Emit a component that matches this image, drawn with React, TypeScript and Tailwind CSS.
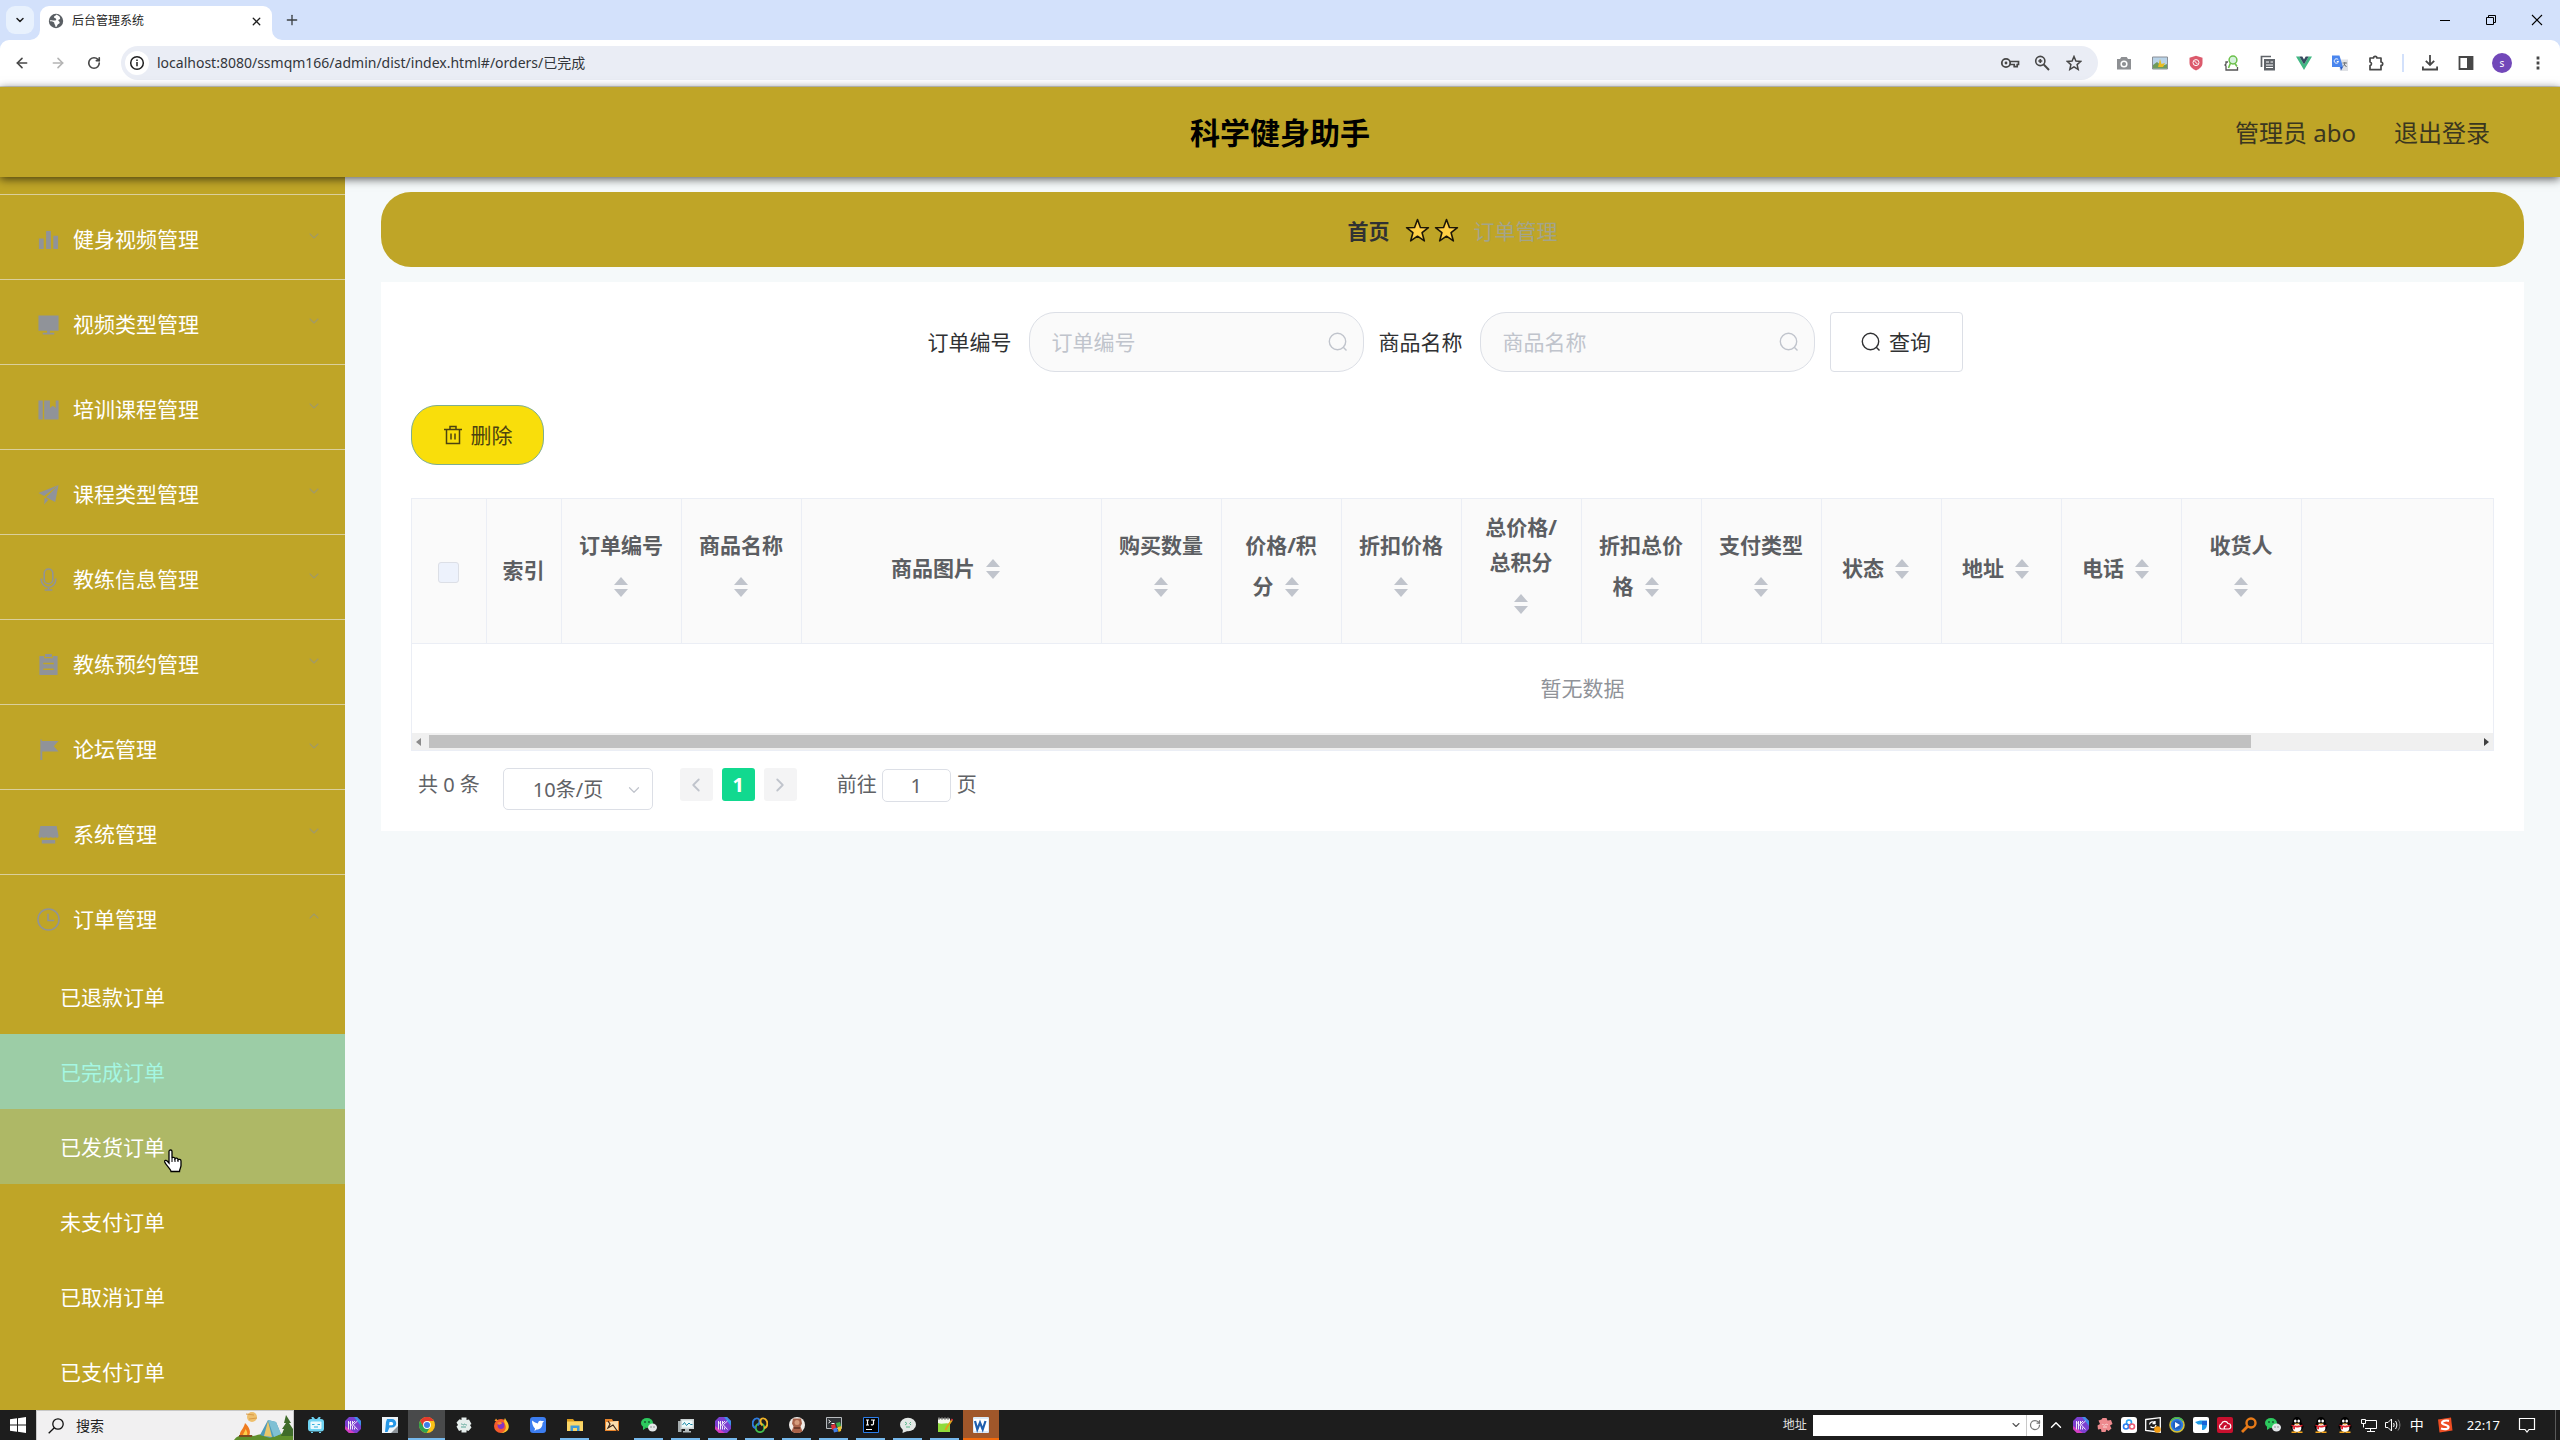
import type { ReactNode } from "react";
import { ArrowLeft, ArrowRight, ChevronDown, ChevronUp, ChevronLeft, ChevronRight, Plus, RotateCw, X } from "lucide-react";

function Svg({ size = 16, box = 16, className, children }: { size?: number; box?: number; className?: string; children: ReactNode }) {
  return (
    <svg width={size} height={size} viewBox={`0 0 ${box} ${box}`} fill="none" className={className ?? "flex-none"} aria-hidden="true">
      {children}
    </svg>
  );
}

/* ---------- browser window ---------- */

function TabStrip() {
  return (
    <div className="flex h-10 flex-none items-end bg-[#d3e1fb]">
      <button aria-label="搜索标签页" className="mb-[6px] ml-[6px] flex h-7 w-7 items-center justify-center rounded-[9px] bg-[#e8f1fd] text-[#1f1f1f]">
        <ChevronDown size={12} strokeWidth={3} />
      </button>
      <div className="relative ml-[6px] flex h-[34px] w-[232px] items-center rounded-t-[9px] bg-white pb-1 pl-2 pr-[9px]">
        <svg className="absolute -left-[10px] bottom-0" width="10" height="10" aria-hidden="true">
          <path d="M10 0v10H0A10 10 0 0 0 10 0Z" fill="#fff" />
        </svg>
        <svg className="absolute -right-[10px] bottom-0" width="10" height="10" aria-hidden="true">
          <path d="M0 0v10h10A10 10 0 0 1 0 0Z" fill="#fff" />
        </svg>
        <Svg>
          <circle cx="8" cy="8" r="7.2" fill="#5a5f64" />
          <path d="M8.6 1.4c-.6 1.4-2.6 1.2-2.6 2.7 0 1.3 1.3.8 2 1.6.7.9-.2 1.8-1.4 1.8C5 7.5 3.3 6.8 1.6 7.600c.6 1.2 2.6.8 3.9 1.3 1.3.6.5 2 1.3 2.7.7.6.2 1.7.9 2.5 1.6-.2 1.2-1.8 2-2.7.7-.8 2.1-.7 2-2-.1-1-1.5-1.2-1.4-2.2.1-1 1.5-.7 1.8-1.5.3-.8-.6-1.3-.5-2.1" fill="#fff" />
        </Svg>
        <span className="ml-2 flex-1 text-xs leading-4 text-[#1f1f1f]">后台管理系统</span>
        <button aria-label="关闭标签页" className="text-[#1f1f1f]">
          <X size={13} strokeWidth={2.4} />
        </button>
      </div>
      <button aria-label="新标签页" className="mb-3 ml-3 text-[#3c4043]">
        <Plus size={16} strokeWidth={2} />
      </button>
      <div className="ml-auto flex h-10 text-black">
        <button aria-label="最小化" className="flex w-[46px] items-center justify-center">
          <Svg size={12} box={12}><path d="M1 6.5h10" stroke="currentColor" /></Svg>
        </button>
        <button aria-label="还原" className="flex w-[46px] items-center justify-center">
          <Svg size={12} box={12}><path d="M1.5 3.5h7v7h-7zM3.5 3.5v-2h7v7h-2" stroke="currentColor" /></Svg>
        </button>
        <button aria-label="关闭" className="flex w-[46px] items-center justify-center">
          <Svg size={12} box={12}><path d="M1 1l10 10M11 1L1 11" stroke="currentColor" strokeWidth="1.1" /></Svg>
        </button>
      </div>
    </div>
  );
}

const extensions: { name: string; icon: ReactNode }[] = [
  {
    name: "截图",
    icon: (
      <>
        <path d="M1 4h3l1.3-2h5.4L12 4h3v10.5H1z" fill="#8e9093" />
        <circle cx="8" cy="9" r="3.6" fill="#fff" />
        <circle cx="8" cy="9" r="2.1" fill="#8e9093" />
      </>
    ),
  },
  {
    name: "图片",
    icon: (
      <>
        <path d="M.5 2h15v12H.5z" fill="#b9d3e8" stroke="#8a8f96" />
        <path d="M1 10l4-3 5 4 5-2v4.5H1z" fill="#6f9b5c" />
        <path d="M8 4l1.5 5L13 8l-2 4H6l1-4z" fill="#e9bd22" />
      </>
    ),
  },
  {
    name: "拦截",
    icon: (
      <>
        <path d="M8 .8l6.5 2V8c0 3.5-3 6-6.5 7.4C4.5 14 1.5 11.5 1.5 8V2.8z" fill="#dc5a6c" />
        <circle cx="8" cy="7.6" r="3" stroke="#fff" />
        <path d="M6.5 6l3 3.2" stroke="#fff" />
      </>
    ),
  },
  {
    name: "查找",
    icon: (
      <>
        <path d="M4 7H2v2L1 10l1 1v4h11.5v-3" stroke="#555" strokeWidth="1.3" />
        <circle cx="9" cy="5" r="3.9" fill="#d5f1dc" stroke="#6cc04a" strokeWidth="1.5" />
        <path d="M6.5 8L4.5 13M11 8.5l2 3" stroke="#6cc04a" strokeWidth="1.6" />
      </>
    ),
  },
  {
    name: "复制",
    icon: (
      <>
        <path d="M1.5 12V1.5H11" stroke="#5f6368" strokeWidth="1.7" />
        <path d="M4 4h11v11.5H4z" fill="#5f6368" />
        <path d="M6 7h3M6 10h7M6 12.5h7M10.5 7H13" stroke="#fff" />
      </>
    ),
  },
  {
    name: "Vue",
    icon: (
      <>
        <path d="M0 1.5h3.3L8 9.5l4.7-8H16L8 15z" fill="#41b883" />
        <path d="M3.3 1.5h3L8 4.5l1.7-3h3L8 9.5z" fill="#34495e" />
      </>
    ),
  },
  {
    name: "翻译",
    icon: (
      <>
        <path d="M6 4.5h10V16H8z" fill="#dfe1e5" />
        <path d="M0 .5h7.5L11 12H0z" fill="#4a86ee" />
        <path d="M8 12h3l-2 3.5z" fill="#2b5cc4" />
        <path d="M6.3 4.8a2.2 2.2 0 1 0 .3 1.7H4.8" stroke="#fff" />
        <path d="M10.5 8H15M12.8 7v1c0 2-1.3 3-1.8 3.5M12 9l2.5 3" stroke="#6b7075" />
      </>
    ),
  },
  {
    name: "扩展程序",
    icon: (
      <path d="M2 3h3.5a1.7 1.7 0 0 1 3.4 0H13v4a1.7 1.7 0 0 1 0 3.4v4.3H2v-4a1.9 1.9 0 0 0 0-3.7z" stroke="#474747" strokeWidth="1.7" strokeLinejoin="round" />
    ),
  },
];

function Toolbar() {
  return (
    <div className="flex-none bg-[#d3e1fb]">
      <div className="flex h-[47px] items-center rounded-t-[9px] border-b border-[#d9d9cf] bg-white text-[#474747]">
        <button aria-label="后退" className="ml-1 flex w-9 justify-center"><ArrowLeft size={16} strokeWidth={2.4} /></button>
        <button aria-label="前进" className="flex w-9 justify-center text-[#b4b4b4]"><ArrowRight size={16} strokeWidth={2.4} /></button>
        <button aria-label="重新加载" className="flex w-9 justify-center"><RotateCw size={14} strokeWidth={2.8} /></button>
        <div className="ml-[9px] flex h-[34px] min-w-0 flex-1 items-center rounded-full bg-[#eaedf5] pl-1 pr-2">
          <span className="flex h-6 w-6 flex-none items-center justify-center rounded-full bg-white">
            <Svg>
              <circle cx="8" cy="8" r="6.3" stroke="#1f1f1f" strokeWidth="1.5" />
              <path d="M8 7v4.3M8 4.5v1.5" stroke="#1f1f1f" strokeWidth="1.5" />
            </Svg>
          </span>
          <input
            aria-label="地址栏"
            readOnly
            value="localhost:8080/ssmqm166/admin/dist/index.html#/orders/已完成"
            className="ml-2 min-w-0 flex-1 bg-transparent text-sm text-[#33363b] outline-none"
          />
          <div className="flex flex-none">
            <button aria-label="密码" className="flex w-8 items-center justify-center">
              <Svg size={20} box={20}>
                <circle cx="6" cy="10" r="4.2" stroke="#474747" strokeWidth="1.8" />
                <circle cx="6" cy="10" r="1.4" fill="#474747" />
                <path d="M10 8.5h8.5v3h-1.3v2.2h-3v-2.2H10" stroke="#474747" strokeWidth="1.7" />
              </Svg>
            </button>
            <button aria-label="缩放" className="flex w-8 items-center justify-center">
              <Svg>
                <circle cx="6.3" cy="6" r="4.6" stroke="#474747" strokeWidth="1.6" />
                <path d="M9.7 9.5L15 15" stroke="#474747" strokeWidth="1.9" />
                <path d="M6.3 4v4M4.3 6h4" stroke="#474747" strokeWidth="1.7" />
              </Svg>
            </button>
            <button aria-label="收藏" className="flex w-8 items-center justify-center">
              <Svg>
                <path d="M8 1.5l1.9 4.5 4.9.4-3.7 3.2 1.1 4.8L8 11.9l-4.2 2.5 1.1-4.8L1.2 6.4l4.9-.4z" stroke="#474747" strokeWidth="1.5" />
              </Svg>
            </button>
          </div>
        </div>
        <div className="ml-2 flex items-center">
          {extensions.map((ext) => (
            <button key={ext.name} aria-label={ext.name} className="flex w-9 justify-center">
              <Svg>{ext.icon}</Svg>
            </button>
          ))}
          <span className="mx-2 h-[18px] w-[2px] bg-[#d3e1fb]" />
          <button aria-label="下载" className="flex w-9 justify-center">
            <Svg>
              <path d="M8 0v9.5M3.8 5.8L8 10l4.2-4.2M.9 11.5v3h14.2v-3" stroke="#474747" strokeWidth="1.8" />
            </Svg>
          </button>
          <button aria-label="侧边栏" className="flex w-9 justify-center">
            <Svg>
              <path d="M1.5 2h13v12h-13z" stroke="#474747" strokeWidth="1.8" />
              <path d="M9 2h6v12H9z" fill="#474747" />
            </Svg>
          </button>
          <button className="mx-2 flex h-5 w-5 items-center justify-center rounded-full bg-[#7248b9] text-[10px] leading-none text-white">s</button>
          <button aria-label="菜单" className="flex w-9 justify-center">
            <Svg>
              <path d="M6.6 1.6h2.8v2.8H6.6zM6.6 6.6h2.8v2.8H6.6zM6.6 11.6h2.8v2.8H6.6z" fill="#474747" />
            </Svg>
          </button>
          <span className="w-1" />
        </div>
      </div>
    </div>
  );
}

/* ---------- admin page ---------- */

const menu: { label: string; icon: ReactNode }[] = [
  {
    label: "健身视频管理",
    icon: <path d="M2 11h5v11H2zM9.5 3h5v19h-5zM17 8h5v14h-5z" fill="currentColor" />,
  },
  {
    label: "视频类型管理",
    icon: <path d="M1.5 2.5h21v16h-21zM10.5 18.5h3v2h-3zM6 20.5h12v2H6z" fill="currentColor" />,
  },
  {
    label: "培训课程管理",
    icon: <path d="M1.5 2.5H6v20H1.5zM7.5 2.5h6v8l3-2.5 3 2.5v-8H22.5v20h-15z" fill="currentColor" />,
  },
  {
    label: "课程类型管理",
    icon: <path d="M22.5 2L1.5 10.5l6 3zM22.5 2L9.5 14.8l9.5 5zM8 15.5l3.8 2L7.5 22.5z" fill="currentColor" />,
  },
  {
    label: "教练信息管理",
    icon: <path d="M12 1a4.5 4.5 0 0 0-4.5 4.5v6.5a4.5 4.5 0 0 0 9 0V5.5A4.5 4.5 0 0 0 12 1zM4.5 11v1.5a7.5 7.5 0 0 0 15 0V11M12 20v3M8 23h8" stroke="currentColor" strokeWidth="1.6" />,
  },
  {
    label: "教练预约管理",
    icon: (
      <>
        <path d="M2.5 3h5v2.5h9V3h5v20h-19zM8.5 1h7v3.3h-7z" fill="currentColor" />
        <path d="M6.5 11h11M6.5 17h11" stroke="#bfa527" strokeWidth="1.4" />
      </>
    ),
  },
  {
    label: "论坛管理",
    icon: <path d="M3.5 1.5H5V3h17.5l-5 5.5 5 5.5H5.5v9h-2z" fill="currentColor" />,
  },
  {
    label: "系统管理",
    icon: <path d="M3.5 3h17l2 10.5c0 2.5-3.5 2.5-3.5.5 0 2-4.5 2-4.5 0 0 2-5 2-5 0 0 2-4.5 2-4.5 0 0 2-3.5 2-3.5-.5zM5 17.8h14v3.7H5z" fill="currentColor" />,
  },
];

const subMenu = ["已退款订单", "已完成订单", "已发货订单", "未支付订单", "已取消订单", "已支付订单"];

function HandCursor() {
  return (
    <svg className="absolute left-[163px] top-10 z-10" width="20" height="24" viewBox="0 0 20 24" aria-hidden="true">
      <path
        d="M6 2.5C6 .5 9 .5 9 2.5V9c.5-1 3-.8 3 .7.6-1 3-.6 3 1 .8-.8 3-.3 3 1.3v4.5c0 2-1.5 3.5-1.5 6H8c0-2.5-5-6-6.3-9.5-.5-1.7 1.5-2.2 2.5-1L6 14z"
        fill="#fff"
        stroke="#000"
        strokeWidth="1.3"
      />
      <path d="M9 9v4M12 10v3M15 11v2" stroke="#000" />
    </svg>
  );
}

function Sidebar() {
  return (
    <nav className="w-[345px] flex-none overflow-hidden bg-[#bfa527] text-[21px] leading-[30px] text-white">
      <div className="h-[18px] border-b border-[#dacf9c]" />
      {menu.map((item) => (
        <button key={item.label} className="flex h-[85px] w-full items-center border-b border-[#dacf9c] pl-[37px] pr-[23px] pt-1 text-left">
          <Svg size={23} box={24} className="flex-none text-[#909399]">{item.icon}</Svg>
          <span className="ml-[13px] flex-1">{item.label}</span>
          <ChevronDown size={16} strokeWidth={1.6} className="mb-[6px] text-[#a19a68]" />
        </button>
      ))}
      <button aria-expanded="true" className="flex h-[84px] w-full items-center pl-[37px] pr-[23px] pt-1 text-left">
        <Svg size={23} box={24} className="flex-none text-[#909399]">
          <circle cx="12" cy="12" r="11" stroke="currentColor" strokeWidth="1.6" />
          <path d="M11.5 6v7H18" stroke="currentColor" strokeWidth="1.6" />
        </Svg>
        <span className="ml-[13px] flex-1">订单管理</span>
        <ChevronUp size={16} strokeWidth={1.6} className="mb-[6px] text-[#a19a68]" />
      </button>
      {subMenu.map((label) => (
        <a
          key={label}
          href="#/orders"
          className={
            label === "已完成订单"
              ? "relative flex h-[75px] items-center bg-[#9ccda6] pl-[60px] text-[#a5f7e2]"
              : label === "已发货订单"
                ? "relative flex h-[75px] items-center bg-[#aeb866] pl-[60px]"
                : "relative flex h-[75px] items-center pl-[60px]"
          }
        >
          {label}
          {label === "已发货订单" && <HandCursor />}
        </a>
      ))}
    </nav>
  );
}

function Star() {
  return (
    <Svg size={25} box={24}>
      <path d="M12 1.5l2.8 7.6 7.700.2-6.100 4.800 2.200 7.900L12 17.500l-6.600 4.500 2.200-7.900L1.500 9.300l7.700-.2z" fill="#ffcf45" stroke="#1c1608" strokeWidth="1.5" strokeLinejoin="round" />
    </Svg>
  );
}

function SearchGlyph({ className }: { className?: string }) {
  return (
    <Svg size={20} box={20} className={className}>
      <circle cx="9.5" cy="9.5" r="8.2" stroke="currentColor" strokeWidth="1.4" />
      <path d="M15.3 15.3l3.2 3.2" stroke="currentColor" strokeWidth="1.4" />
    </Svg>
  );
}

function SearchField({ id, label }: { id: string; label: string }) {
  return (
    <div className="flex items-center">
      <label htmlFor={id} className="text-[#303133]">{label}</label>
      <div className="relative ml-[17px] w-[335px]">
        <input
          id={id}
          placeholder={label}
          className="h-[60px] w-full rounded-[26px] border border-[#dcdfe6] bg-[#fafafa] pl-[22px] pr-12 outline-none placeholder:text-[#c0c4cc]"
        />
        <SearchGlyph className="absolute right-4 top-5 text-[#c0c4cc]" />
      </div>
    </div>
  );
}

function SortCaret() {
  return (
    <span className="inline-flex h-[51px] w-9 items-center justify-center pb-[3px] align-middle">
      <svg width="14" height="20" viewBox="0 0 14 20" aria-hidden="true">
        <path d="M7 0l7 8H0zM7 20l7-8H0z" fill="#c0c4cc" />
      </svg>
    </span>
  );
}

const columns: { label: string; wide?: boolean }[] = [
  { label: "订单编号" },
  { label: "商品名称" },
  { label: "商品图片", wide: true },
  { label: "购买数量" },
  { label: "价格/积分" },
  { label: "折扣价格" },
  { label: "总价格/总积分" },
  { label: "折扣总价格" },
  { label: "支付类型" },
  { label: "状态" },
  { label: "地址" },
  { label: "电话" },
  { label: "收货人" },
];

function OrdersTable() {
  return (
    <div className="border border-[#ebeef5]">
      <div className="overflow-hidden">
        <table className="w-[2341px] table-fixed border-collapse">
          <colgroup>
            <col className="w-[74px]" />
            <col className="w-[75px]" />
            {columns.map((c) => (
              <col key={c.label} className={c.wide ? "w-[300px]" : "w-[120px]"} />
            ))}
            <col />
          </colgroup>
          <thead>
            <tr className="h-[144px] border-b border-[#ebeef5] bg-[#fafafa] leading-[35px] text-[#5c5e62]">
              <th className="border-r border-[#ebeef5]">
                <input type="checkbox" aria-label="全选" className="inline-block h-[21px] w-[21px] appearance-none rounded-[3px] border border-[#dcdfe6] bg-[#edf2fc] align-middle" />
              </th>
              <th className="border-r border-[#ebeef5] font-bold">索引</th>
              {columns.map((c) => (
                <th key={c.label} className="border-r border-[#ebeef5] px-[14px] font-bold">
                  {c.label}
                  <SortCaret />
                </th>
              ))}
              <th />
            </tr>
          </thead>
          <tbody>
            <tr>
              <td colSpan={columns.length + 3} className="h-[90px] text-center text-[#909399]">暂无数据</td>
            </tr>
          </tbody>
        </table>
      </div>
      <div className="flex h-[17px] items-center bg-[#f0f0f0] px-1">
        <svg width="5" height="8" aria-hidden="true"><path d="M5 0v8L0 4z" fill="#8b8b8b" /></svg>
        <div className="mx-2 h-[13px] flex-1">
          <div className="h-full w-[89%] bg-[#c1c1c1]" />
        </div>
        <svg width="5" height="8" aria-hidden="true"><path d="M0 0v8l5-4z" fill="#404040" /></svg>
      </div>
    </div>
  );
}

function Pagination() {
  return (
    <div className="mt-[17px] flex items-start pl-[7px] text-[20px] leading-[33px] text-[#606266]">
      <span>共 0 条</span>
      <div className="relative ml-[23px]">
        <select aria-label="每页条数" className="h-[42px] w-[150px] appearance-none rounded-[5px] border border-[#dcdfe6] bg-white pl-[29px]">
          <option>10条/页</option>
        </select>
        <ChevronDown size={18} strokeWidth={1.6} className="absolute right-[10px] top-[13px] text-[#c0c4cc]" />
      </div>
      <div className="ml-[27px] flex gap-[9px]">
        <button aria-label="上一页" className="flex h-[33px] w-[33px] items-center justify-center rounded-[3px] bg-[#f4f4f5] text-[#c0c4cc]">
          <ChevronLeft size={22} strokeWidth={2} />
        </button>
        <button className="h-[33px] w-[33px] rounded-[3px] bg-[#11d98f] font-bold text-white">1</button>
        <button aria-label="下一页" className="flex h-[33px] w-[33px] items-center justify-center rounded-[3px] bg-[#f4f4f5] text-[#c0c4cc]">
          <ChevronRight size={22} strokeWidth={2} />
        </button>
      </div>
      <label htmlFor="jump" className="ml-10">前往</label>
      <input id="jump" defaultValue="1" className="ml-[5px] mt-px h-[33px] w-[69px] rounded-[5px] border border-[#dcdfe6] text-center outline-none" />
      <span className="ml-[6px]">页</span>
    </div>
  );
}

function Orders() {
  return (
    <main className="min-w-0 flex-1 bg-[#f5f9fa] px-9 pt-[15px] text-[21px] leading-[30px]">
      <div className="flex h-[75px] items-center justify-center rounded-[30px] bg-[#bfa527] pt-[2px]">
        <a href="#/" className="font-bold text-[#303133]">首页</a>
        <span className="mx-[15px] flex gap-1">
          <Star />
          <Star />
        </span>
        <span className="text-[#a3a48c]">订单管理</span>
      </div>
      <section className="mt-[15px] bg-white px-[30px] pb-[21px] pt-[30px]">
        <form className="flex items-center justify-center gap-[15px] pr-[15px]">
          <SearchField id="orderid" label="订单编号" />
          <SearchField id="goodname" label="商品名称" />
          <button type="button" className="flex h-[60px] w-[133px] items-center justify-center gap-2 rounded border border-[#dcdfe6] text-[#303133]">
            <SearchGlyph />
            查询
          </button>
        </form>
        <button className="mb-[33px] mt-[33px] flex h-[60px] w-[133px] items-center justify-center gap-2 rounded-[26px] border border-[#7fae8f] bg-[#f9de0b] text-[#4c4310]">
          <Svg size={20} box={20}>
            <path d="M1 4.5h18M7 4.5V1.5h6v3M3.5 4.5v14h13v-14M8 8.5v6M12 8.5v6" stroke="currentColor" strokeWidth="1.5" />
          </Svg>
          删除
        </button>
        <OrdersTable />
        <Pagination />
      </section>
    </main>
  );
}

/* ---------- task bar ---------- */

const prism = (
  <>
    <path d="M4 0h8l4 4v8l-4 4H4l-4-4V4z" fill="#7c3fd0" />
    <path d="M9 0h3l4 4v5z" fill="#3f8fe8" />
    <path d="M0 9v3l4 4h6z" fill="#d63fc0" />
    <path d="M3.5 4v8.5M5.5 4v8.5M7.5 4v3l5 5.500M12.500 4L8.500 7.500M10 4L7.500 6.500M7.500 9v3.500M9.500 10.500v2M3.500 5l4 4" stroke="#fff" strokeWidth=".9" />
  </>
);

const wechat = (
  <>
    <ellipse cx="6" cy="6" rx="6" ry="5" fill="#2dc95e" />
    <path d="M2 9l0 4 3-2z" fill="#2dc95e" />
    <circle cx="4" cy="5" r=".9" fill="#14532d" />
    <circle cx="8" cy="5" r=".9" fill="#14532d" />
    <ellipse cx="11.5" cy="10.5" rx="4.5" ry="4" fill="#e4e7e9" />
    <circle cx="10" cy="10" r=".7" fill="#777" />
    <circle cx="13" cy="10" r=".7" fill="#777" />
  </>
);

const penguin = (
  <>
    <ellipse cx="8" cy="9.5" rx="6.5" ry="5" fill="#000" />
    <ellipse cx="8" cy="5" rx="4.5" ry="5" fill="#000" />
    <ellipse cx="8" cy="11" rx="4.4" ry="4.3" fill="#fff" />
    <ellipse cx="6.3" cy="4" rx="1.3" ry="1.6" fill="#fff" />
    <ellipse cx="9.7" cy="4" rx="1.3" ry="1.6" fill="#fff" />
    <path d="M5 6.5h6l-3 1.3z" fill="#f6a51b" />
    <path d="M2.5 7.5c3 1.600 8 1.600 11 0v1.700c-3 1.300-6 1.300-7.500 1.100v2H4.200v-2.500l-1.700-.8z" fill="#e0202a" />
    <path d="M2.5 14.5h5V16h-5zM8.5 14.5h5V16h-5z" fill="#f6a51b" />
  </>
);

const chrome = (
  <>
    <circle cx="8" cy="8" r="8" fill="#fbc116" />
    <path d="M1 4a8 8 0 0 1 14 0H8L4.6 10z" fill="#e33b2e" />
    <path d="M1 4a8 8 0 0 0 6.5 12l3.9-6.3L4.6 10z" fill="#31a350" />
    <circle cx="8" cy="8" r="3.9" fill="#fff" />
    <circle cx="8" cy="8" r="3" fill="#3f7fe8" />
  </>
);

const taskApps: { name: string; running?: boolean; icon: ReactNode }[] = [
  {
    name: "bilibili",
    icon: (
      <>
        <path d="M4 0l2.5 3M12 0L9.5 3" stroke="#6fd3f2" strokeWidth="2" />
        <rect x="0" y="2" width="16" height="12.5" rx="3" fill="#6fd3f2" />
        <rect x="2.5" y="4.5" width="11" height="7.5" rx="1" fill="#e9fafe" />
        <path d="M4 7.5h2.5M9.5 7.5H12M6 10h4" stroke="#35b0dd" strokeWidth="1.2" />
        <path d="M3 15.5h2M11 15.5h2" stroke="#6fd3f2" />
      </>
    ),
  },
  { name: "录屏", icon: prism },
  {
    name: "PDF",
    icon: (
      <>
        <path d="M0 0h16v16H0z" fill="#eef4f8" />
        <path d="M5 2h5a4 4 0 0 1 0 8.5H7.5L5.5 15H3L4 5z" fill="#2698e8" />
        <path d="M7.5 5h2a1.6 1.6 0 0 1 0 3.3H7z" fill="#fff" />
        <path d="M16 9v7H9z" fill="#8b9298" />
      </>
    ),
  },
  { name: "Chrome", running: true, icon: chrome },
  {
    name: "设置",
    icon: (
      <>
        <path d="M5.5.5h5V3l2.5-.5L15.5 7 14 8l1.5 2.5-3 3.5-2-.8V15.5h-5V13L3 14 .5 9.5 2 8 .5 5.5 3.5 2.2l2 .9z" fill="#e6eeec" />
        <path d="M5 7.5c1.5-2 2 2 3 0s1.5 2 3 0M5 10h5" stroke="#58a596" />
      </>
    ),
  },
  {
    name: "Firefox",
    icon: (
      <>
        <circle cx="8" cy="9" r="7" fill="#f55b2c" />
        <path d="M12 1c1 2.5 4 5 3.8 9-.4 3.5-3 6-7.8 6 4-1.5 5.5-4 4.5-7.5C12 6 10 5 12 1z" fill="#fbc42c" />
        <path d="M1.5 4L3 1.5l2 2.5z" fill="#f99b26" />
        <circle cx="8" cy="8.5" r="3.4" fill="#8434c4" />
        <path d="M4 6c2-1.5 5-1 5 .5L6 8z" fill="#fb8f2b" />
      </>
    ),
  },
  {
    name: "飞鸟",
    icon: (
      <>
        <rect width="16" height="16" rx="3" fill="#3c7df0" />
        <path d="M2 3.500c2 1.500 4 2.500 6 3 0-2 1.500-3.500 3.500-2.500L14 4l-1.500 2c0 4-2 6.500-6 6.500L4.500 14 5 11.500C3 9.500 2 7 2 3.500z" fill="#fff" />
      </>
    ),
  },
  {
    name: "资源管理器",
    running: true,
    icon: (
      <>
        <path d="M0 2h6l1.5 2H16v3H0z" fill="#d99a1c" />
        <path d="M0 4.5h16V14H0z" fill="#fbd667" />
        <path d="M3.5 14V8.5h9V14H10v-3H6v3z" fill="#3f9bd8" />
      </>
    ),
  },
  {
    name: "文件夹",
    icon: (
      <>
        <path d="M1 2h7l1 2h6v10H1z" fill="#e8842a" />
        <path d="M2 5l12-1v9H2z" fill="#f9ddae" />
        <path d="M4 4l2 3-2 4 5-3 5 7" stroke="#3b2416" strokeWidth="1.2" />
      </>
    ),
  },
  { name: "微信", running: true, icon: wechat },
  {
    name: "监视器",
    running: true,
    icon: (
      <>
        <path d="M0 4h3.5v11H0z" fill="#a5acad" />
        <path d="M2.5 2H16v10H2.5z" fill="#cdd5d6" />
        <path d="M4 3.5h10.5v7H4z" fill="#eefafa" />
        <path d="M4.5 8l2-2.5 2 3L11 6l1.5 1.5h2" stroke="#1e8aa8" />
        <path d="M7 12h4v2h2v1.5H5V14h2z" fill="#b3babb" />
      </>
    ),
  },
  { name: "录屏助手", running: true, icon: prism },
  {
    name: "Navicat",
    running: true,
    icon: (
      <>
        <circle cx="8" cy="10.8" r="4.3" stroke="#45c04f" strokeWidth="1.900" />
        <path d="M4 11C.5 10.500 0 6 1.500 3.500 3 .5 7 .8 7.500 3.500c.3 2-.5 3.500-2 5" stroke="#2f7de0" strokeWidth="1.900" />
        <path d="M12 11c3.500-.5 4-5 2.500-7.500C13 .5 9 .8 8.500 3.500c-.3 2 .5 3.500 2 5" stroke="#f0b429" strokeWidth="1.900" />
      </>
    ),
  },
  {
    name: "头像",
    running: true,
    icon: (
      <>
        <circle cx="8" cy="8" r="8" fill="#f0ece8" />
        <path d="M4 1.5h8l1 5-1.5 3 2 5L10 16H6l-3.5-1.5 2-5L3 6.5z" fill="#a8634a" />
        <circle cx="8" cy="5.5" r="2.5" fill="#d59c7c" />
        <path d="M5 11h6" stroke="#5f2f22" strokeWidth="1.5" />
      </>
    ),
  },
  {
    name: "终端",
    running: true,
    icon: (
      <>
        <path d="M.5.5h15v11H.5z" fill="#303438" stroke="#b8bcbf" />
        <path d="M2.5 3l2 1.5-2 1.5M5.5 6.5h3" stroke="#fff" />
        <path d="M5 8l4-1 1 4-4 2z" fill="#e0303a" />
        <path d="M10 6l4-1 1 4-4 1z" fill="#3fae49" />
        <path d="M7 12l4-1.500 1 4-4 1z" fill="#3f7fe8" />
        <path d="M11.500 10l4-1-.5 5-2.500 1z" fill="#f0c22c" />
      </>
    ),
  },
  {
    name: "IntelliJ IDEA",
    running: true,
    icon: (
      <>
        <path d="M.5.5h15v15H.5z" fill="#000" stroke="#2b7de9" />
        <path d="M3 3h3M4.5 3v5M3 8h3M8 3h4M10.5 3v3.5c0 1.5-1.5 1.7-2.5 1M3 12.5h6" stroke="#fff" strokeWidth="1.2" />
      </>
    ),
  },
  {
    name: "聊天",
    running: true,
    icon: (
      <>
        <ellipse cx="8" cy="7.5" rx="8" ry="6.8" fill="#e3e8e6" />
        <path d="M3 12l-.5 4 5-2z" fill="#e3e8e6" />
        <path d="M5 5l2 1.5L5 8M11 5L9.5 6.5 11 8M6 10h4" stroke="#5bb88c" />
      </>
    ),
  },
  {
    name: "Notepad++",
    running: true,
    icon: (
      <>
        <path d="M1 1.5h12V15H1z" fill="#f6f8ee" />
        <path d="M1 6c4 2 8-1 12 1v8H1z" fill="#8fdb3b" />
        <path d="M2 0v3M5 0v3M8 0v3M11 0v3" stroke="#777" />
        <path d="M15 3l-5 7-1.5 3" stroke="#e0a21d" strokeWidth="2" />
        <path d="M15.5 2l-1 1.5" stroke="#c5303a" strokeWidth="2" />
      </>
    ),
  },
];

const trayIcons: { name: string; icon: ReactNode }[] = [
  { name: "录屏", icon: prism },
  {
    name: "花瓣",
    icon: (
      <>
        <path d="M5.5 1h4l1 2.5L14 3l1.5 4-2.5 1.5 1.5 3-3 2.5-2-1.5L8.5 15h-4L4 12l-3 .5L.5 8.5 3 7 1.5 3.5l3-1z" fill="#ee8a8e" />
        <path d="M5 8c1-2 2 1 3 0s2-1 3 0M6 10h4" stroke="#f9d6d4" />
      </>
    ),
  },
  {
    name: "网盘",
    icon: (
      <>
        <rect width="16" height="16" rx="3" fill="#fff" />
        <circle cx="8" cy="5.5" r="2.5" stroke="#2ba4f0" strokeWidth="1.6" />
        <circle cx="5" cy="9.5" r="2.5" stroke="#2b7df0" strokeWidth="1.6" />
        <circle cx="11" cy="9.5" r="2.5" stroke="#ec5a72" strokeWidth="1.6" />
      </>
    ),
  },
  {
    name: "更新",
    icon: (
      <>
        <path d="M.7 2.5L15.3.7v14.5L.7 13.5z" stroke="#fff" strokeWidth="1.3" />
        <path d="M4.5 7.5c.5-3 4-3.5 5.5-1.5M10 4v2.5H7.5M11 8c-.5 3-4 3.5-5.5 1.5" stroke="#fff" strokeWidth="1.3" />
        <circle cx="12.5" cy="12.5" r="3.3" fill="#f39c12" />
      </>
    ),
  },
  {
    name: "播放器",
    icon: (
      <>
        <circle cx="8" cy="8" r="7" fill="#2f7de0" stroke="#d6c136" strokeWidth="1.6" />
        <path d="M2 4a7 7 0 0 1 12 0" stroke="#45b35a" strokeWidth="1.6" />
        <circle cx="8" cy="8" r="4.5" fill="#1f5fc0" />
        <path d="M6 5l5 3-5 3z" fill="#fff" />
      </>
    ),
  },
  {
    name: "腾讯文档",
    icon: (
      <>
        <rect width="16" height="16" rx="2" fill="#fff" />
        <path d="M2 5l5-1.5h7V7c0 4-2 6-5 6V7.5H5z" fill="#1e9be8" />
        <path d="M9 4h5v4H9z" fill="#1764d8" />
      </>
    ),
  },
  {
    name: "云",
    icon: (
      <>
        <rect width="16" height="16" rx="2" fill="#c8102e" />
        <path d="M4.5 12a2.7 2.7 0 0 1 0-5.2A3.5 3.5 0 0 1 11 6.5c3.5 0 3.8 5.5.5 5.5zM7.5 12c-1-2 .5-3.5 2-3" stroke="#fff" strokeWidth="1.2" />
      </>
    ),
  },
  {
    name: "搜索",
    icon: (
      <>
        <circle cx="10" cy="6" r="4.5" stroke="#e87a18" strokeWidth="2.4" />
        <path d="M6.5 9.5L1 15" stroke="#e87a18" strokeWidth="2.8" />
      </>
    ),
  },
  { name: "微信", icon: wechat },
  { name: "QQ 1", icon: penguin },
  { name: "QQ 2", icon: penguin },
  { name: "QQ 3", icon: penguin },
  {
    name: "网络",
    icon: <path d="M4 3.5h11.5v8H4M9.5 11.5v3M6 14.5h8M.5 2.5h4v4h-4zM2.5 6.5v4" stroke="#fff" />,
  },
  {
    name: "音量",
    icon: (
      <>
        <path d="M.5 5.5H3L6.5 2v12L3 10.5H.5zM8.5 6c.8 1.3.8 2.7 0 4M10.5 4c1.8 2.5 1.8 5.5 0 8" stroke="#fff" />
        <path d="M13 2.5c2.5 3.5 2.5 7.5 0 11" stroke="#888" />
      </>
    ),
  },
];

function TentArt() {
  return (
    <svg width="59" height="29" viewBox="0 0 59 29" aria-hidden="true">
      <path d="M0 29c4-6 12-6 20-4 10-4 26-3 39-1v5z" fill="#5f8f2c" />
      <circle cx="18" cy="6" r="5" fill="#eebf6c" />
      <path d="M12 3l8 1M15 8l8-1" stroke="#d99a48" />
      <path d="M52 4l5 8h-2l4 6v7H47l3-7h-2l4-6h-2z" fill="#3f6b2a" />
      <path d="M26 24L34 9l8 2 5 12-11 4z" fill="#4f9cbb" />
      <path d="M34 9l8 2 5 12-7 3z" fill="#7fc0d4" />
      <path d="M30 25l4-15 4 16z" fill="#e9c66b" />
      <path d="M6 25c-1-5 4-7 5-13 5 5 6 9 4 13z" fill="#ef7b1f" />
      <path d="M9 25c0-3 2-4 2.5-7 2 3 2.5 5 1 7z" fill="#fbcf4b" />
      <path d="M5 25h13" stroke="#7a4a20" strokeWidth="2" />
    </svg>
  );
}

function Taskbar() {
  return (
    <footer className="flex h-[30px] flex-none items-stretch bg-[#1d1d1d] text-white">
      <button aria-label="开始" className="flex w-9 items-center justify-center">
        <Svg>
          <path d="M0 2.3l7-1v6.2H0zM8 1.2L16 0v7.5H8zM0 8.5h7v6.2l-7-1zM8 8.5h8V16l-8-1.2z" fill="#fff" />
        </Svg>
      </button>
      <div className="flex w-[258px] items-center overflow-hidden border border-b-0 border-[#c8c8c8] bg-[#f1f0f1] pl-[11px]">
        <Svg>
          <circle cx="10" cy="6" r="5.2" stroke="#111" strokeWidth="1.3" />
          <path d="M6.3 9.7L.7 15.3" stroke="#111" strokeWidth="1.3" />
        </Svg>
        <input aria-label="搜索" placeholder="搜索" className="ml-3 w-0 flex-1 bg-transparent text-sm outline-none placeholder:text-[#222]" />
        <TentArt />
      </div>
      <div className="ml-[3px] flex">
        {taskApps.map((app) => (
          <button
            key={app.name}
            aria-label={app.name}
            className={app.name === "Chrome" ? "relative flex w-[37px] items-center justify-center bg-[#494a4b]" : "relative flex w-[37px] items-center justify-center"}
          >
            <Svg>{app.icon}</Svg>
            {app.running && (
              <span className={app.name === "Chrome" ? "absolute inset-x-0 bottom-0 h-[2px] bg-[#76b9ed]" : "absolute inset-x-1 bottom-0 h-[2px] bg-[#76b9ed]"} />
            )}
          </button>
        ))}
        <button aria-label="Word" className="relative flex w-9 items-center justify-center bg-[#a0572a]">
          <Svg>
            <rect width="16" height="16" rx="1" fill="#dce9f6" />
            <path d="M1 2h14v12H1z" fill="#fff" />
            <path d="M2 4l2.3 8.5L7 5.500l2.700 7L12.500 4" stroke="#1f5fae" strokeWidth="2.200" />
          </Svg>
          <span className="absolute inset-x-0 bottom-0 h-[2px] bg-[#f26a0c]" />
        </button>
      </div>
      <div className="ml-auto flex items-center">
        <label htmlFor="taskaddr" className="text-xs text-[#e0e0e0]">地址</label>
        <div className="ml-[6px] flex h-[21px] w-[230px] items-center bg-white">
          <input id="taskaddr" className="w-0 flex-1 outline-none" />
          <ChevronDown size={12} strokeWidth={2.2} className="text-[#555]" />
          <span className="ml-1 h-full w-px bg-[#c9c9c9]" />
          <RotateCw size={12} strokeWidth={2.5} className="mx-[2px] text-[#777]" />
        </div>
        <button aria-label="显示隐藏的图标" className="flex w-[26px] justify-center">
          <ChevronUp size={18} strokeWidth={1.9} />
        </button>
        {trayIcons.map((t) => (
          <button key={t.name} aria-label={t.name} className="flex w-6 justify-center">
            <Svg>{t.icon}</Svg>
          </button>
        ))}
        <button className="w-6 text-center text-sm leading-4">中</button>
        <button aria-label="输入法" className="flex w-8 justify-center">
          <Svg>
            <path d="M1 2.5L14 .5l1.5 13-13 2z" fill="#ee4d22" />
            <path d="M12 3.8C8 3 5 4 5 6s6.5 1.5 6.5 4-4 2.7-7.5 1.5" stroke="#fff" strokeWidth="2.2" />
          </Svg>
        </button>
        <span className="ml-[6px] text-[13px] leading-4">22:17</span>
        <button aria-label="通知" className="ml-[18px] flex">
          <Svg size={18} box={18}>
            <path d="M1.5 2.5h15v11H11L9 16l-2-2.5H1.5z" stroke="#fff" strokeWidth="1.2" />
          </Svg>
        </button>
        <span className="ml-[19px] mr-1 h-[30px] w-px bg-[#5a5a5a]" />
      </div>
    </footer>
  );
}

export default function App() {
  return (
    <div className="flex h-screen flex-col overflow-hidden font-['Noto_Sans','Noto_Sans_CJK_SC',sans-serif]">
      <TabStrip />
      <Toolbar />
      <header className="relative z-10 grid h-[90px] flex-none grid-cols-3 items-center bg-[#bfa527] pr-[70px] pt-[2px] shadow-[0_2px_9px_rgba(0,0,0,0.65)]">
        <h1 className="col-start-2 -mr-[70px] text-center text-[30px] font-bold leading-10 text-black">科学健身助手</h1>
        <div className="flex justify-end gap-[38px] text-2xl text-[#3a3620]">
          <span>管理员 abo</span>
          <button>退出登录</button>
        </div>
      </header>
      <div className="flex min-h-0 flex-1">
        <Sidebar />
        <Orders />
      </div>
      <Taskbar />
    </div>
  );
}
